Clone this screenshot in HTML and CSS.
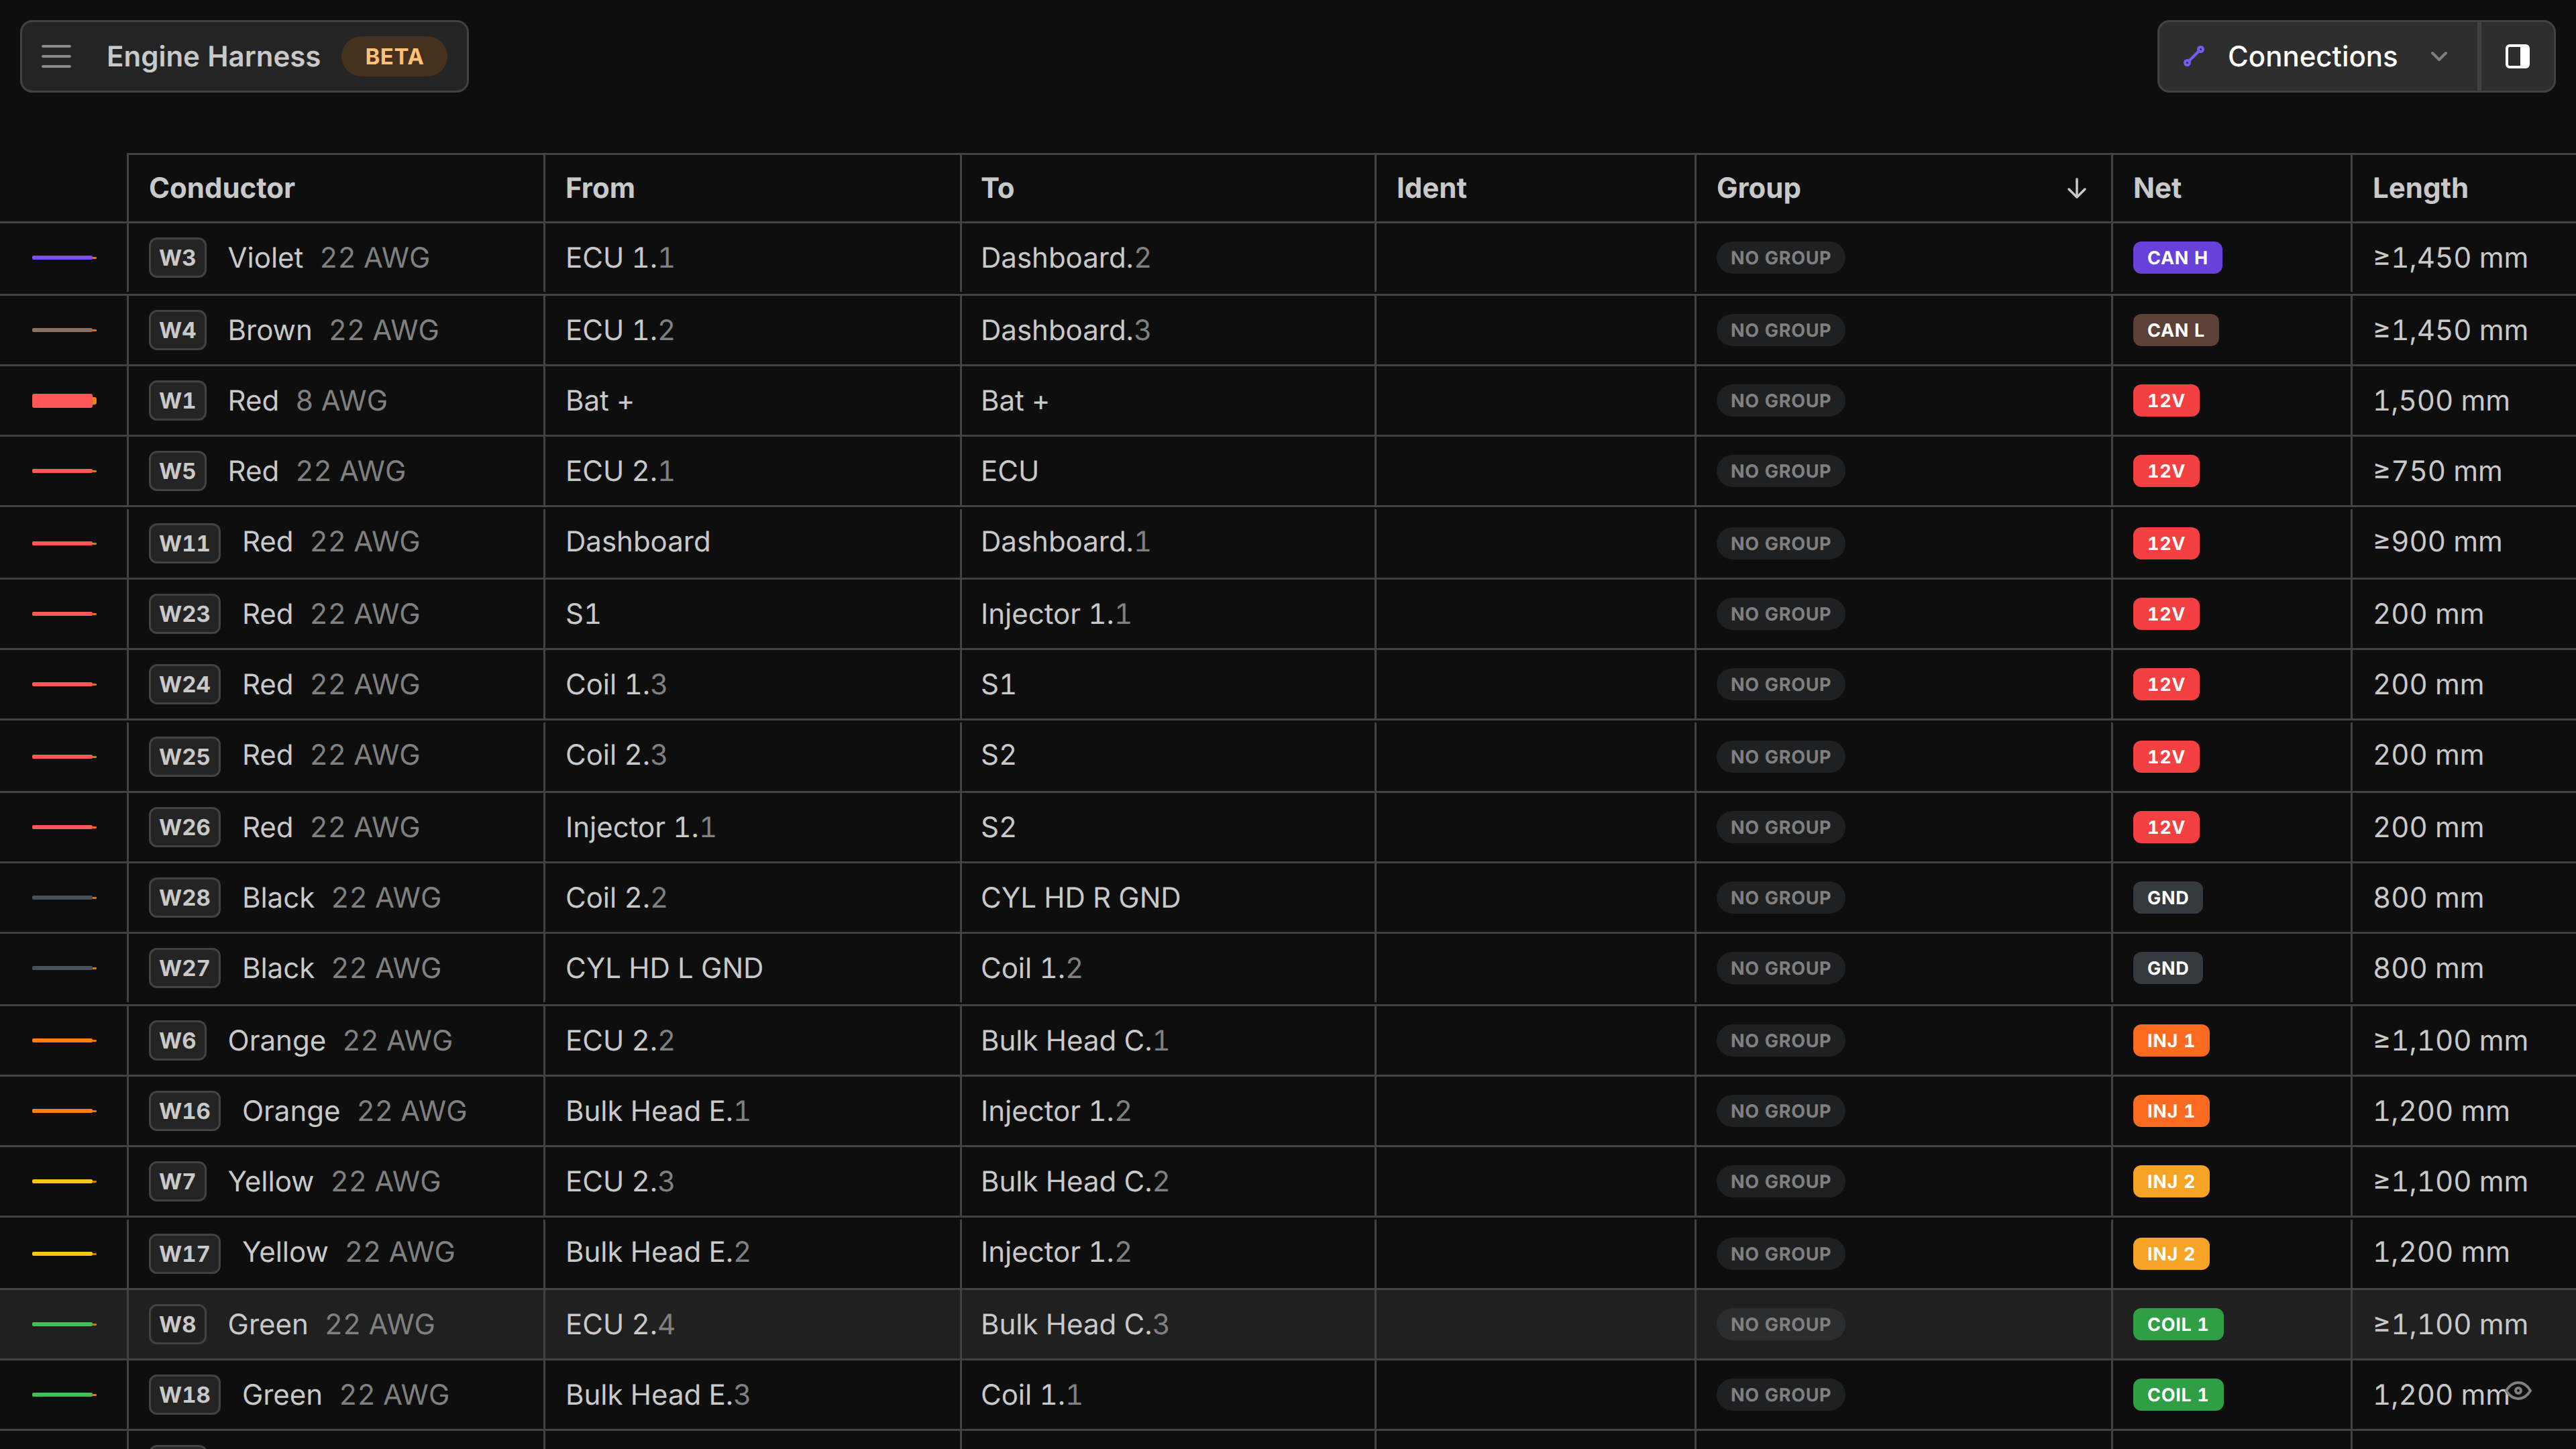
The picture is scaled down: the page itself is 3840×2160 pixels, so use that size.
FILE: index.html
```html
<!DOCTYPE html>
<html lang="en">
<head>
<meta charset="utf-8">
<title>Engine Harness</title>
<link rel="stylesheet" href="styles.css">
</head>
<body>
<header class="topbar">
  <div class="title-panel">
    <svg class="menu-icon" viewBox="0 0 48 48" fill="none"><path d="M4 9h40M4 24h40M4 39h40"/></svg>
    <span class="title">Engine Harness</span>
    <span class="beta">BETA</span>
  </div>
  <div class="view-panel">
    <div class="view-select">
      <svg class="route-icon" viewBox="0 0 36 36" fill="none"><circle cx="5.5" cy="27.500" r="3.5"/><circle cx="25.5" cy="7.500" r="3.5"/><path d="M8 25L23 10"/></svg>
      <span class="view-label">Connections</span>
      <svg class="chevron" viewBox="0 0 28 18" fill="none"><path d="M4 4l10 10L24 4"/></svg>
    </div>
    <div class="view-toggle">
      <svg class="panel-icon" viewBox="0 0 36 36"><path fill-rule="evenodd" d="M6 0h24a6 6 0 0 1 6 6v24a6 6 0 0 1-6 6H6a6 6 0 0 1-6-6V6a6 6 0 0 1 6-6zM6 4a2 2 0 0 0-2 2v24a2 2 0 0 0 2 2h16V4z"/></svg>
    </div>
  </div>
</header>

<main class="table">
  <div class="row head">
    <div class="cell blank"></div>
    <div class="cell">Conductor</div>
    <div class="cell">From</div>
    <div class="cell to">To</div>
    <div class="cell">Ident</div>
    <div class="cell sort">Group<svg class="sort-icon" viewBox="0 0 30 32" fill="none"><path d="M15 2v27M3 17l12 12 12-12"/></svg></div>
    <div class="cell">Net</div>
    <div class="cell">Length</div>
  </div>

  <div class="row tall up">
    <div class="cell blank"><span class="wire violet"></span></div>
    <div class="cell"><span class="tag">W3</span><span class="name">Violet</span><span class="dim">22 AWG</span></div>
    <div class="cell">ECU 1.<span class="dim-inline">1</span></div>
    <div class="cell to">Dashboard.<span class="dim-inline">2</span></div>
    <div class="cell"></div>
    <div class="cell"><span class="group">NO GROUP</span></div>
    <div class="cell"><span class="net can-h">CAN H</span></div>
    <div class="cell">≥1,450 mm</div>
  </div>
  <div class="row">
    <div class="cell blank"><span class="wire brown"></span></div>
    <div class="cell"><span class="tag">W4</span><span class="name">Brown</span><span class="dim">22 AWG</span></div>
    <div class="cell">ECU 1.<span class="dim-inline">2</span></div>
    <div class="cell to">Dashboard.<span class="dim-inline">3</span></div>
    <div class="cell"></div>
    <div class="cell"><span class="group">NO GROUP</span></div>
    <div class="cell"><span class="net can-l">CAN L</span></div>
    <div class="cell">≥1,450 mm</div>
  </div>
  <div class="row">
    <div class="cell blank"><span class="wire red thick"></span></div>
    <div class="cell"><span class="tag">W1</span><span class="name">Red</span><span class="dim">8 AWG</span></div>
    <div class="cell">Bat +</div>
    <div class="cell to">Bat +</div>
    <div class="cell"></div>
    <div class="cell"><span class="group">NO GROUP</span></div>
    <div class="cell"><span class="net v12">12V</span></div>
    <div class="cell">1,500 mm</div>
  </div>
  <div class="row">
    <div class="cell blank"><span class="wire red"></span></div>
    <div class="cell"><span class="tag">W5</span><span class="name">Red</span><span class="dim">22 AWG</span></div>
    <div class="cell">ECU 2.<span class="dim-inline">1</span></div>
    <div class="cell to">ECU</div>
    <div class="cell"></div>
    <div class="cell"><span class="group">NO GROUP</span></div>
    <div class="cell"><span class="net v12">12V</span></div>
    <div class="cell">≥750 mm</div>
  </div>
  <div class="row tall down">
    <div class="cell blank"><span class="wire red"></span></div>
    <div class="cell"><span class="tag">W11</span><span class="name">Red</span><span class="dim">22 AWG</span></div>
    <div class="cell">Dashboard</div>
    <div class="cell to">Dashboard.<span class="dim-inline">1</span></div>
    <div class="cell"></div>
    <div class="cell"><span class="group">NO GROUP</span></div>
    <div class="cell"><span class="net v12">12V</span></div>
    <div class="cell">≥900 mm</div>
  </div>
  <div class="row">
    <div class="cell blank"><span class="wire red"></span></div>
    <div class="cell"><span class="tag">W23</span><span class="name">Red</span><span class="dim">22 AWG</span></div>
    <div class="cell">S1</div>
    <div class="cell to">Injector 1.<span class="dim-inline">1</span></div>
    <div class="cell"></div>
    <div class="cell"><span class="group">NO GROUP</span></div>
    <div class="cell"><span class="net v12">12V</span></div>
    <div class="cell">200 mm</div>
  </div>
  <div class="row">
    <div class="cell blank"><span class="wire red"></span></div>
    <div class="cell"><span class="tag">W24</span><span class="name">Red</span><span class="dim">22 AWG</span></div>
    <div class="cell">Coil 1.<span class="dim-inline">3</span></div>
    <div class="cell to">S1</div>
    <div class="cell"></div>
    <div class="cell"><span class="group">NO GROUP</span></div>
    <div class="cell"><span class="net v12">12V</span></div>
    <div class="cell">200 mm</div>
  </div>
  <div class="row tall down">
    <div class="cell blank"><span class="wire red"></span></div>
    <div class="cell"><span class="tag">W25</span><span class="name">Red</span><span class="dim">22 AWG</span></div>
    <div class="cell">Coil 2.<span class="dim-inline">3</span></div>
    <div class="cell to">S2</div>
    <div class="cell"></div>
    <div class="cell"><span class="group">NO GROUP</span></div>
    <div class="cell"><span class="net v12">12V</span></div>
    <div class="cell">200 mm</div>
  </div>
  <div class="row">
    <div class="cell blank"><span class="wire red"></span></div>
    <div class="cell"><span class="tag">W26</span><span class="name">Red</span><span class="dim">22 AWG</span></div>
    <div class="cell">Injector 1.<span class="dim-inline">1</span></div>
    <div class="cell to">S2</div>
    <div class="cell"></div>
    <div class="cell"><span class="group">NO GROUP</span></div>
    <div class="cell"><span class="net v12">12V</span></div>
    <div class="cell">200 mm</div>
  </div>
  <div class="row">
    <div class="cell blank"><span class="wire black"></span></div>
    <div class="cell"><span class="tag">W28</span><span class="name">Black</span><span class="dim">22 AWG</span></div>
    <div class="cell">Coil 2.<span class="dim-inline">2</span></div>
    <div class="cell to">CYL HD R GND</div>
    <div class="cell"></div>
    <div class="cell"><span class="group">NO GROUP</span></div>
    <div class="cell"><span class="net gnd">GND</span></div>
    <div class="cell">800 mm</div>
  </div>
  <div class="row tall up">
    <div class="cell blank"><span class="wire black"></span></div>
    <div class="cell"><span class="tag">W27</span><span class="name">Black</span><span class="dim">22 AWG</span></div>
    <div class="cell">CYL HD L GND</div>
    <div class="cell to">Coil 1.<span class="dim-inline">2</span></div>
    <div class="cell"></div>
    <div class="cell"><span class="group">NO GROUP</span></div>
    <div class="cell"><span class="net gnd">GND</span></div>
    <div class="cell">800 mm</div>
  </div>
  <div class="row">
    <div class="cell blank"><span class="wire orange"></span></div>
    <div class="cell"><span class="tag">W6</span><span class="name">Orange</span><span class="dim">22 AWG</span></div>
    <div class="cell">ECU 2.<span class="dim-inline">2</span></div>
    <div class="cell to">Bulk Head C.<span class="dim-inline">1</span></div>
    <div class="cell"></div>
    <div class="cell"><span class="group">NO GROUP</span></div>
    <div class="cell"><span class="net inj1">INJ 1</span></div>
    <div class="cell">≥1,100 mm</div>
  </div>
  <div class="row">
    <div class="cell blank"><span class="wire orange"></span></div>
    <div class="cell"><span class="tag">W16</span><span class="name">Orange</span><span class="dim">22 AWG</span></div>
    <div class="cell">Bulk Head E.<span class="dim-inline">1</span></div>
    <div class="cell to">Injector 1.<span class="dim-inline">2</span></div>
    <div class="cell"></div>
    <div class="cell"><span class="group">NO GROUP</span></div>
    <div class="cell"><span class="net inj1">INJ 1</span></div>
    <div class="cell">1,200 mm</div>
  </div>
  <div class="row">
    <div class="cell blank"><span class="wire yellow"></span></div>
    <div class="cell"><span class="tag">W7</span><span class="name">Yellow</span><span class="dim">22 AWG</span></div>
    <div class="cell">ECU 2.<span class="dim-inline">3</span></div>
    <div class="cell to">Bulk Head C.<span class="dim-inline">2</span></div>
    <div class="cell"></div>
    <div class="cell"><span class="group">NO GROUP</span></div>
    <div class="cell"><span class="net inj2">INJ 2</span></div>
    <div class="cell">≥1,100 mm</div>
  </div>
  <div class="row tall down">
    <div class="cell blank"><span class="wire yellow"></span></div>
    <div class="cell"><span class="tag">W17</span><span class="name">Yellow</span><span class="dim">22 AWG</span></div>
    <div class="cell">Bulk Head E.<span class="dim-inline">2</span></div>
    <div class="cell to">Injector 1.<span class="dim-inline">2</span></div>
    <div class="cell"></div>
    <div class="cell"><span class="group">NO GROUP</span></div>
    <div class="cell"><span class="net inj2">INJ 2</span></div>
    <div class="cell">1,200 mm</div>
  </div>
  <div class="row hover">
    <div class="cell blank"><span class="wire green"></span></div>
    <div class="cell"><span class="tag">W8</span><span class="name">Green</span><span class="dim">22 AWG</span></div>
    <div class="cell">ECU 2.<span class="dim-inline">4</span></div>
    <div class="cell to">Bulk Head C.<span class="dim-inline">3</span></div>
    <div class="cell"></div>
    <div class="cell"><span class="group">NO GROUP</span></div>
    <div class="cell"><span class="net coil1">COIL 1</span></div>
    <div class="cell">≥1,100 mm</div>
  </div>
  <div class="row">
    <div class="cell blank"><span class="wire green"></span></div>
    <div class="cell"><span class="tag">W18</span><span class="name">Green</span><span class="dim">22 AWG</span></div>
    <div class="cell">Bulk Head E.<span class="dim-inline">3</span></div>
    <div class="cell to">Coil 1.<span class="dim-inline">1</span></div>
    <div class="cell"></div>
    <div class="cell"><span class="group">NO GROUP</span></div>
    <div class="cell"><span class="net coil1">COIL 1</span></div>
    <div class="cell length-eye">1,200 mm<svg class="eye-icon" viewBox="0 0 24 24" fill="none"><path d="M10 12a2 2 0 1 0 4 0a2 2 0 0 0-4 0"/><path d="M21 12c-2.4 4-5.4 6-9 6c-3.6 0-6.6-2-9-6c2.4-4 5.400-6 9-6c3.600 0 6.600 2 9 6"/></svg></div>
  </div>
  <div class="row">
    <div class="cell blank"></div>
    <div class="cell"><span class="tag tag-cut"></span></div>
    <div class="cell"></div>
    <div class="cell"></div>
    <div class="cell"></div>
    <div class="cell"></div>
    <div class="cell"></div>
    <div class="cell"></div>
  </div>
</main>
</body>
</html>
```

FILE: styles.css
```css
* { box-sizing: border-box; }

html, body {
  margin: 0;
  height: 2160px;
  overflow: hidden;
  background: #0e0e0e;
}

body {
  font-family: Inter, "Liberation Sans", sans-serif;
  font-size: 42px;
  font-variant-numeric: tabular-nums;
  color: #c9c9c9;
  text-rendering: geometricPrecision;
  white-space: nowrap;
}

/* Top bar */
.topbar {
  display: flex;
  justify-content: space-between;
  padding: 30px 30px 0;
  height: 138px;
}

.title-panel {
  display: flex;
  align-items: center;
  width: 669px;
  height: 108px;
  padding-left: 27px;
  background: #242424;
  border: 3px solid #424242;
  border-radius: 18px;
}

.menu-icon {
  width: 48px;
  height: 48px;
  margin-right: 51px;
  stroke: #8a8a8a;
  stroke-width: 4;
  stroke-linecap: round;
}

.title {
  font-weight: 600;
  margin-right: 31px;
}

.beta {
  display: flex;
  align-items: center;
  height: 60px;
  padding: 0 35px;
  border-radius: 30px;
  background: #46311f;
  color: #ffc078;
  font-size: 33px;
  font-weight: 700;
  letter-spacing: 0.6px;
}

.view-panel {
  display: flex;
  height: 108px;
  background: #2e2e2e;
  border: 3px solid #424242;
  border-radius: 18px;
}

.view-select {
  display: flex;
  align-items: center;
  width: 477px;
  padding-left: 36px;
  border-right: 3px solid #424242;
}

.route-icon {
  width: 36px;
  height: 36px;
  margin-right: 30px;
  stroke: #7a5af0;
  stroke-width: 4;
  stroke-linecap: round;
}

.view-label {
  color: #fff;
  font-weight: 500;
}

.chevron {
  width: 28px;
  height: 18px;
  margin-left: 47px;
  stroke: #808080;
  stroke-width: 4;
  stroke-linecap: round;
  stroke-linejoin: round;
}

.view-toggle {
  display: flex;
  align-items: center;
  justify-content: center;
  width: 111px;
  border-left: 3px solid #424242;
}

.panel-icon {
  width: 36px;
  height: 36px;
  fill: #fff;
}

/* Table */
.table {
  margin-top: 90px;
  width: 3840px;
}

.row {
  display: grid;
  grid-template-columns: 189px 621px 621px 618px 477px 621px 357px 336px;
  height: 105px;
  border-bottom: 3px solid #424242;
}

.row.tall { height: 108px; }
.row.up { padding-bottom: 3px; }
.row.down { padding-top: 3px; }
.row.hover { background: #202020; }

.cell {
  display: flex;
  align-items: center;
  position: relative;
  padding: 0 30px;
  border-left: 3px solid #424242;
  min-width: 0;
}

.cell.to { padding-left: 28px; }

.cell.blank {
  border-left: 0;
  padding: 0 0 0 48px;
}

/* In these rows the text sits a little above the badges beside it. */
.row.down .cell:nth-child(3),
.row.down .cell:nth-child(4),
.row.down .cell:nth-child(8) { padding-bottom: 6px; }
.row.down .name,
.row.down .dim { margin-bottom: 6px; }

.head { height: 105px; font-weight: 700; }
.head .cell { border-top: 3px solid #424242; }
.head .cell.blank { border-top: 0; }

.sort { justify-content: space-between; }

.sort-icon {
  width: 30px;
  height: 32px;
  margin-right: 6px;
  stroke: #c9c9c9;
  stroke-width: 3.5;
  stroke-linecap: round;
  stroke-linejoin: round;
}

/* Wire sample */
.wire {
  position: relative;
  display: block;
  width: 90px;
  height: 6px;
  border-radius: 2px;
}

.wire::after {
  content: "";
  position: absolute;
  left: 90px;
  top: 1.5px;
  width: 6px;
  height: 3px;
  background: #e0720f;
  border-radius: 0 1px 1px 0;
}

.wire.thick { height: 21px; border-radius: 3px; }
.wire.thick::after { top: 5px; height: 11px; background: #e8821c; border-radius: 0 3px 3px 0; }

.violet { background: #7950f2; }
.brown { background: #8d6e63; }
.red { background: #ff5757; }
.black { background: #495057; }
.orange { background: #fd7e14; }
.yellow { background: #fcc419; }
.green { background: #40c057; }

/* Conductor cell */
.tag {
  display: flex;
  align-items: center;
  height: 60px;
  padding: 0 12px;
  background: #242424;
  border: 3px solid #424242;
  border-radius: 12px;
  font-size: 33px;
  font-weight: 700;
  margin-right: 32px;
}

.tag-cut { width: 87px; }
.hover .tag { background: #202020; }

.name { margin-right: 24px; }
.dim { color: #808080; }
.dim-inline { color: #808080; }

/* Badges */
.group {
  display: flex;
  align-items: center;
  height: 48px;
  padding: 0 21px;
  border-radius: 24px;
  background: #1f2022;
  color: #808080;
  font-size: 27px;
  font-weight: 700;
  letter-spacing: 0.7px;
}

.hover .group { background: #2c2d2f; }

.net {
  display: flex;
  align-items: center;
  height: 48px;
  padding: 0 21px;
  border-radius: 12px;
  color: #fff;
  font-size: 27px;
  font-weight: 700;
  letter-spacing: 0.7px;
}

.can-h { background: #6741d9; }
.can-l { background: #5d4037; }
.v12 { background: #f44040; }
.gnd { background: #343a40; }
.inj1 { background: #fa6a20; }
.inj2 { background: #f7a326; }
.coil1 { background: #2f9e44; }

.eye-icon {
  position: absolute;
  left: 223px;
  top: 21px;
  width: 48px;
  height: 48px;
  stroke: #808080;
  stroke-width: 2;
  stroke-linecap: round;
  stroke-linejoin: round;
}
```
